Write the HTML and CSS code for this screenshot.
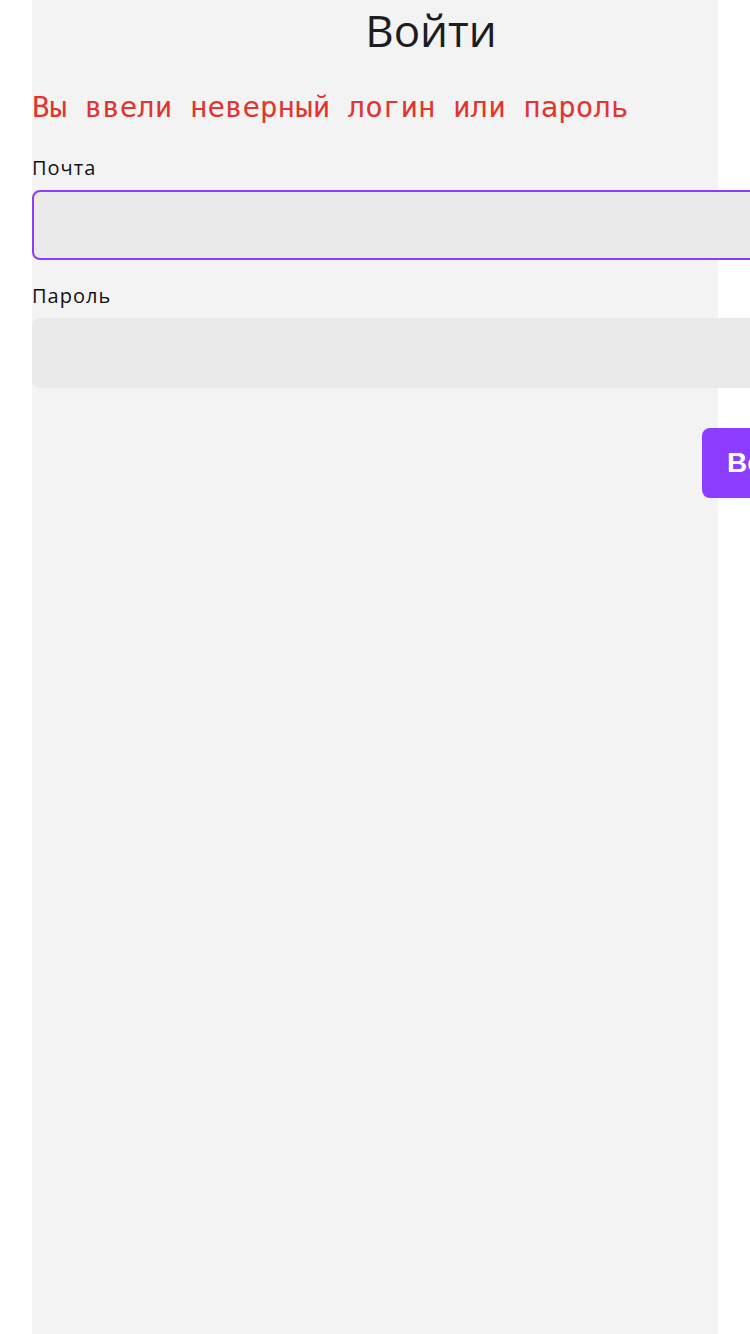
FILE: index.html
```html
<!DOCTYPE html>
<html lang="ru">
<head>
<meta charset="utf-8">
<title>Войти</title>
<link rel="stylesheet" href="styles.css">
</head>
<body>
<div class="panel">
  <form class="form">
    <h1 class="title">Войти</h1>
    <p class="error">Вы ввели неверный логин или пароль</p>
    <label class="label" for="email">Почта</label>
    <input class="input input-focus" id="email" type="text">
    <label class="label label-second" for="pass">Пароль</label>
    <input class="input" id="pass" type="password">
    <button class="button" type="button">Войти</button>
  </form>
</div>
</body>
</html>
```
FILE: styles.css
```css
html, body {
  margin: 0;
  padding: 0;
  background: #ffffff;
  overflow: hidden;
}
.panel {
  width: 686px;
  margin-left: 32px;
  min-height: 1334px;
  background: #f3f3f3;
}
.form {
  width: 798px;
  display: flex;
  flex-direction: column;
  padding-top: 4px;
}
.title {
  margin: 0;
  font-family: "Open Sans", sans-serif;
  font-weight: 400;
  font-size: 44px;
  line-height: 1.2;
  text-align: center;
  color: #1d1d1d;
}
.error {
  margin: 33px 0 0;
  font-family: "DejaVu Sans Mono", monospace;
  font-size: 29.15px;
  line-height: 1.2;
  color: #e03530;
}
.label {
  margin-top: 31px;
  font-family: "Open Sans", sans-serif;
  font-size: 20px;
  letter-spacing: 1px;
  line-height: 24px;
  color: #111111;
}
.label-second {
  margin-top: 24px;
}
.input {
  box-sizing: border-box;
  margin: 10px 0 0;
  width: 798px;
  height: 70px;
  border: 2px solid transparent;
  border-radius: 8px;
  background: #eaeaea;
  outline: none;
}
.input-focus {
  border-color: #8e3cf7;
}
.button {
  align-self: flex-start;
  margin: 40px 0 0 670px;
  height: 70px;
  padding: 0 25px;
  border: none;
  border-radius: 8px;
  background: #8c3dff;
  color: #ffffff;
  font-family: "Liberation Sans", Arial, sans-serif;
  font-weight: 700;
  font-size: 28px;
}
```
